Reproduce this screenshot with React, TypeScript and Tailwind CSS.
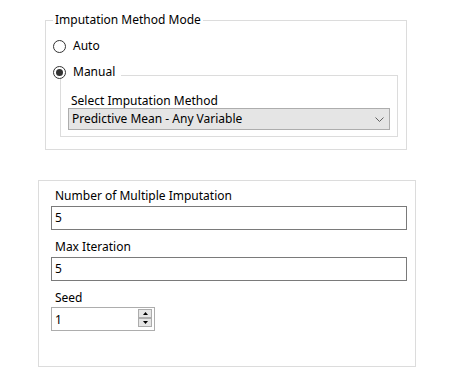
import React from "react";

function Radio({ checked }: { checked?: boolean }) {
  return (
    <span className="flex h-[13px] w-[13px] items-center justify-center rounded-full border border-[#333333] bg-white">
      {checked && <span className="h-[7px] w-[7px] rounded-full bg-[#333333]" />}
    </span>
  );
}

function TextBox({ value }: { value: string }) {
  return (
    <div className="flex h-[24px] w-[356px] items-center border border-[#7a7a7a] bg-white pl-[3px] leading-[16px]">
      {value}
    </div>
  );
}

function SpinButton({ up }: { up?: boolean }) {
  return (
    <div className="flex h-[9px] w-[14px] items-center justify-center border border-[#acacac] bg-[#e5e5e5]">
      <svg width="5" height="3" viewBox="0 0 5 3">
        {up ? (
          <path d="M0 3 L2.5 0 L5 3 Z" fill="#000" />
        ) : (
          <path d="M0 0 L2.5 3 L5 0 Z" fill="#000" />
        )}
      </svg>
    </div>
  );
}

export default function App() {
  return (
    <div className="flex h-[391px] w-[454px] flex-col bg-white font-['Noto_Sans',sans-serif] text-[12px] text-black">
      {/* Imputation Method Mode group */}
      <fieldset className="ml-[45px] mt-[12px] w-[362px] border border-[#dcdcdc] px-[7px] pb-[12px]">
        <legend className="px-[2px] leading-[16px]">Imputation Method Mode</legend>
        <div className="mt-[5px] flex h-[26px] items-center gap-[7px]">
          <Radio />
          <span className="leading-[16px]">Auto</span>
        </div>
        <div className="relative z-10 flex h-[26px] items-center">
          <span className="flex h-[14px] items-center gap-[7px] bg-white pr-[6px]">
            <Radio checked />
            <span className="leading-[16px]">Manual</span>
          </span>
        </div>
        <div className="-mt-[10px] ml-[7px] mr-[1px] border border-[#dcdcdc] px-[7px] pb-[6px] pt-[18px]">
          <div className="h-[14px] pl-[3px] leading-[14px]">Select Imputation Method</div>
          <div className="flex h-[22px] items-center justify-between border border-[#adadad] bg-[#e5e5e5] pl-[3px] pr-[5px] leading-[16px]">
            <span>Predictive Mean - Any Variable</span>
            <svg width="9" height="5" viewBox="0 0 9 5">
              <path d="M0.5 0.5 L4.5 4.5 L8.5 0.5" stroke="#606060" fill="none" strokeWidth="1" />
            </svg>
          </div>
        </div>
      </fieldset>

      {/* Imputation settings group */}
      <div className="ml-[38px] mt-[30px] h-[187px] w-[378px] border border-[#dcdcdc] pl-[12px] pt-[7px]">
        <div className="h-[16px] pl-[4px] leading-[16px]">Number of Multiple Imputation</div>
        <div className="mt-[2px]">
          <TextBox value="5" />
        </div>
        <div className="mt-[9px] h-[16px] pl-[4px] leading-[16px]">Max Iteration</div>
        <div className="mt-[2px]">
          <TextBox value="5" />
        </div>
        <div className="mt-[9px] h-[16px] pl-[4px] leading-[16px]">Seed</div>
        <div className="mt-[1px] flex h-[24px] w-[104px] items-start justify-between border border-[#adadad] bg-white pl-[3px] pr-[2px] pt-[1px]">
          <span className="mt-[3px] leading-[16px]">1</span>
          <div className="flex flex-col">
            <SpinButton up />
            <SpinButton />
          </div>
        </div>
      </div>
    </div>
  );
}
